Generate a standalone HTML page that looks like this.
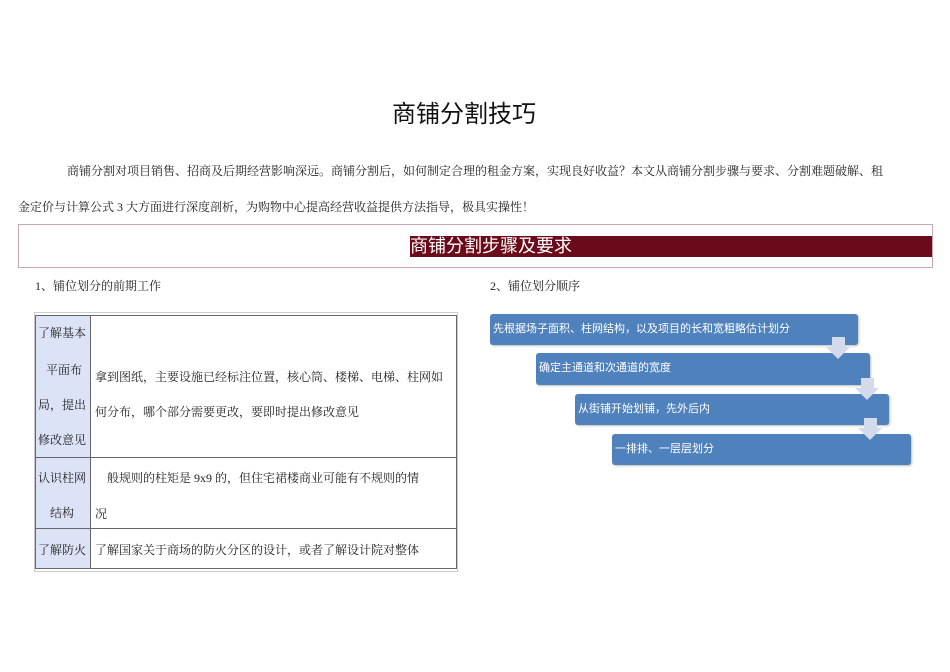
<!DOCTYPE html>
<html><head><meta charset="utf-8"><style>
body{margin:0;width:950px;height:672px;background:#fff;position:relative;overflow:hidden;font-family:"Liberation Serif","Noto Serif CJK SC","Noto Sans CJK SC",serif;color:#222}
.a{position:absolute;white-space:nowrap}
.s{font-size:12px}
.fb{position:absolute;background:#4f81bd;border-radius:3px;color:#fff;font-family:"Liberation Sans","Noto Sans CJK SC",sans-serif;font-size:11px;line-height:31px;padding-left:3px;box-shadow:1px 1px 2px #bbb}
.ar{position:absolute;width:0;height:0}
.lc{position:absolute;left:35px;width:55px;background:#dde3f7}
</style></head><body>
<div class="a" style="left:392px;top:94px;font-size:24px;font-family:'Liberation Sans','Noto Sans CJK SC',sans-serif;color:#111">商铺分割技巧</div>
<div class="a s" style="left:67px;top:162px">商铺分割对项目销售、招商及后期经营影响深远。商铺分割后，如何制定合理的租金方案，实现良好收益？本文从商铺分割步骤与要求、分割难题破解、租</div>
<div class="a s" style="left:18px;top:198px">金定价与计算公式 3 大方面进行深度剖析，为购物中心提高经营收益提供方法指导，极具实操性！</div>
<div class="a" style="left:18px;top:224px;width:913px;height:42px;border:1px solid #c8a8b4"></div>
<div class="a" style="left:410px;top:236px;width:522px;height:21px;background:#6b0a1a;color:#fff;font-size:18px;line-height:21px;font-family:'Liberation Sans','Noto Sans CJK SC',sans-serif">商铺分割步骤及要求</div>
<div class="a s" style="left:35px;top:277px">1、铺位划分的前期工作</div>
<div class="a s" style="left:490px;top:277px">2、铺位划分顺序</div>
<div class="a" style="left:34px;top:312px;width:422px;height:258px;border:1px solid #ccc"></div>
<div class="lc" style="top:315px;height:253px"></div>
<div class="a" style="left:35px;top:315px;width:420px;height:252px;border:1px solid #666"></div>
<div class="a" style="left:90px;top:315px;width:1px;height:253px;background:#666"></div>
<div class="a" style="left:35px;top:457px;width:421px;height:1px;background:#666"></div>
<div class="a" style="left:35px;top:528px;width:421px;height:1px;background:#666"></div>
<div class="a s" style="left:38px;top:324px">了解基本</div>
<div class="a s" style="left:46px;top:361px">平面布</div>
<div class="a s" style="left:38px;top:396px">局，提出</div>
<div class="a s" style="left:38px;top:431px">修改意见</div>
<div class="a s" style="left:95px;top:368px">拿到图纸，主要设施已经标注位置，核心筒、楼梯、电梯、柱网如</div>
<div class="a s" style="left:95px;top:403px">何分布，哪个部分需要更改，要即时提出修改意见</div>
<div class="a s" style="left:38px;top:469px">认识柱网</div>
<div class="a s" style="left:50px;top:504px">结构</div>
<div class="a s" style="left:107px;top:469px">般规则的柱矩是 9x9 的，但住宅裙楼商业可能有不规则的情</div>
<div class="a s" style="left:95px;top:505px">况</div>
<div class="a s" style="left:38px;top:541px">了解防火</div>
<div class="a s" style="left:95px;top:541px">了解国家关于商场的防火分区的设计，或者了解设计院对整体</div>
<div class="fb" style="left:490px;top:314px;width:365px;height:31px">先根据场子面积、柱网结构，以及项目的长和宽粗略估计划分</div>
<div class="fb" style="left:536px;top:353px;width:331px;height:32px">确定主通道和次通道的宽度</div>
<div class="fb" style="left:575px;top:394px;width:311px;height:31px">从街铺开始划铺，先外后内</div>
<div class="fb" style="left:612px;top:434px;width:296px;height:31px">一排排、一层层划分</div>
<div class="a" style="left:832px;top:337px;width:13px;height:10px;background:#d3daec"></div>
<div class="ar" style="left:826px;top:347px;border-left:12px solid transparent;border-right:12px solid transparent;border-top:12px solid #d3daec"></div>
<div class="a" style="left:861px;top:378px;width:13px;height:10px;background:#d3daec"></div>
<div class="ar" style="left:855px;top:388px;border-left:12px solid transparent;border-right:12px solid transparent;border-top:12px solid #d3daec"></div>
<div class="a" style="left:864px;top:418px;width:13px;height:10px;background:#d3daec"></div>
<div class="ar" style="left:858px;top:428px;border-left:12px solid transparent;border-right:12px solid transparent;border-top:12px solid #d3daec"></div>
</body></html>
